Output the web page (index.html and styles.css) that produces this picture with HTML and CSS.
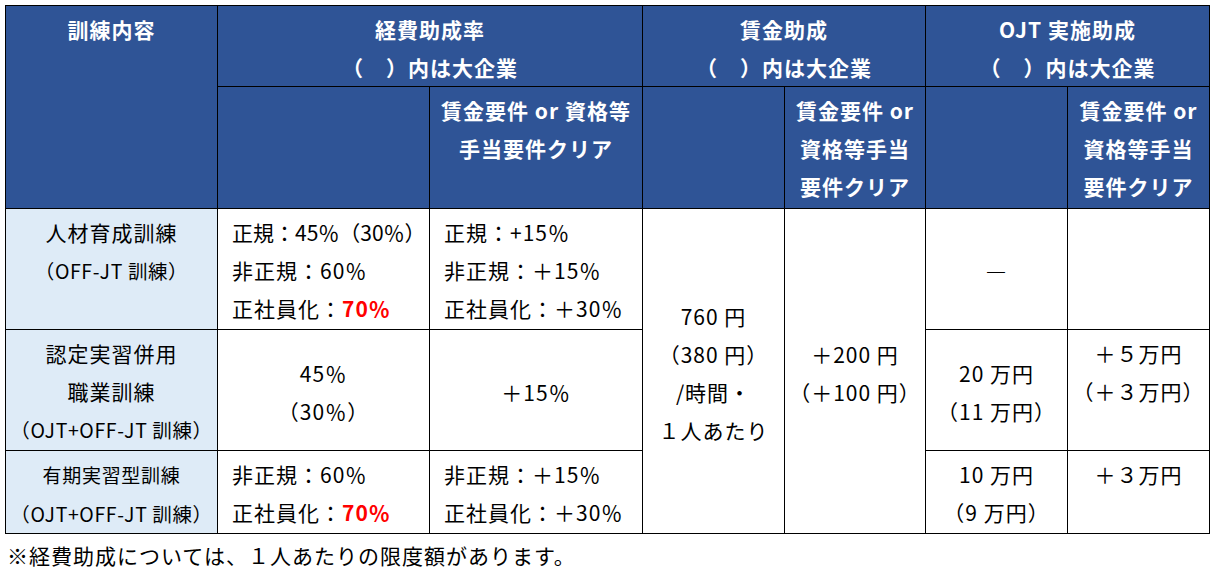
FILE: index.html
```html
<!DOCTYPE html>
<html lang="ja">
<head>
<meta charset="utf-8">
<title>訓練助成</title>
<link rel="stylesheet" href="styles.css">
</head>
<body>
<table class="grid">
  <colgroup>
    <col class="c1"><col class="c2"><col class="c3"><col class="c4"><col class="c5"><col class="c6"><col class="c7">
  </colgroup>
  <thead>
    <tr class="h1">
      <th rowspan="2">訓練内容</th>
      <th colspan="2">経費助成率<br>（　）内は大企業</th>
      <th colspan="2">賃金助成<br>（　）内は大企業</th>
      <th colspan="2">OJT 実施助成<br>（　）内は大企業</th>
    </tr>
    <tr class="h2">
      <th></th>
      <th>賃金要件 or 資格等<br>手当要件クリア</th>
      <th></th>
      <th>賃金要件 or<br>資格等手当<br>要件クリア</th>
      <th></th>
      <th>賃金要件 or<br>資格等手当<br>要件クリア</th>
    </tr>
  </thead>
  <tbody>
    <tr class="r1">
      <td class="lbl">人材育成訓練<br><span class="sm">（OFF-JT 訓練）</span></td>
      <td class="l"><span class="tight">正規：45％（30％）</span><br>非正規：60％<br>正社員化：<b class="red">70％</b></td>
      <td class="l">正規：+15％<br>非正規：＋15％<br>正社員化：＋30％</td>
      <td class="mid" rowspan="3">760 円<br>（380 円）<br>/時間・<br>１人あたり</td>
      <td class="mid" rowspan="3">＋200 円<br>（＋100 円）</td>
      <td class="mid">―</td>
      <td></td>
    </tr>
    <tr class="r2">
      <td class="lbl">認定実習併用<br>職業訓練<br><span class="sm">（OJT+OFF-JT 訓練）</span></td>
      <td class="mid">45％<br>（30％）</td>
      <td class="mid">＋15％</td>
      <td class="mid">20 万円<br>（11 万円）</td>
      <td>＋５万円<br>（＋３万円）</td>
    </tr>
    <tr class="r3">
      <td class="lbl"><span class="md">有期実習型訓練</span><br><span class="sm">（OJT+OFF-JT 訓練）</span></td>
      <td class="l">非正規：60％<br>正社員化：<b class="red">70％</b></td>
      <td class="l">非正規：＋15％<br>正社員化：＋30％</td>
      <td>10 万円<br>（9 万円）</td>
      <td>＋３万円</td>
    </tr>
  </tbody>
</table>
<p class="note">※経費助成については、１人あたりの限度額があります。</p>
</body>
</html>
```
FILE: styles.css
```css
html, body {
  margin: 0;
  background: #fff;
}
body {
  padding: 5px 0 0 5px;
  font-family: "Noto Sans CJK JP", "Noto Sans", sans-serif;
  font-size: 21px;
  letter-spacing: 1px;
  color: #000;
}
.grid {
  border-collapse: collapse;
  table-layout: fixed;
  width: 1205px;
}
.c1 { width: 212px; }
.c2 { width: 212px; }
.c3 { width: 213px; }
.c4 { width: 142px; }
.c5 { width: 141px; }
.c6 { width: 142px; }
.c7 { width: 142px; }
.grid th,
.grid td {
  border: 1px solid #000;
  padding: 4px 0 0;
  line-height: 38px;
  vertical-align: top;
  text-align: center;
  font-weight: 400;
}
.grid th {
  background: #2f5496;
  color: #fff;
  font-weight: 700;
}
.h1 { height: 81px; }
.h2 { height: 122px; }
.r1 { height: 121px; }
.r2 { height: 121px; }
.r3 { height: 81px; }
.grid td.lbl { background: #deebf7; }
.grid td.l { text-align: left; padding-left: 14px; white-space: nowrap; }
.grid td.mid { vertical-align: middle; }
.tight { letter-spacing: 0; }
.sm { font-size: 19.5px; letter-spacing: 0.6px; }
.md { font-size: 19px; letter-spacing: 0.7px; }
.red { color: #ff0000; font-weight: 700; }
.note {
  margin: 0;
  padding: 2px 0 0 2px;
  line-height: 39px;
}
```
